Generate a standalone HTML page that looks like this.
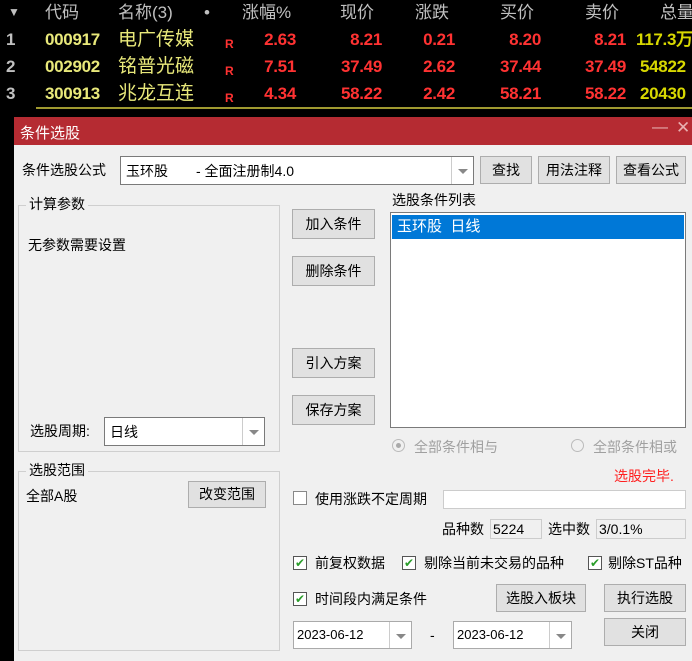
<!DOCTYPE html><html><head><meta charset="utf-8"><style>
*{margin:0;padding:0;box-sizing:border-box}
body{width:692px;height:661px;background:#000;position:relative;overflow:hidden;font-family:"Liberation Sans","Noto Sans CJK SC",sans-serif}
.a{position:absolute;white-space:nowrap}
.t{font-size:17px;line-height:20px}
.n{font-family:"Liberation Sans Narrow","Liberation Sans",sans-serif;font-weight:bold;letter-spacing:-0.3px}
.h{color:#c0c0c0}.y{color:#e8e87a}.r{color:#ff3232}.o{color:#d8d800}
.rt{text-align:right}
.f{font-size:14px;color:#000;line-height:16px}
.btn{position:absolute;background:#e1e1e1;border:1px solid #adadad;font-size:14px;text-align:center;color:#000}
.box{position:absolute;background:#fff;border:1px solid #7a7a7a}
.dd{position:absolute;right:0;top:0;bottom:0;width:22px;border-left:1px solid #ccc;background:#fff}
.dd:after{content:"";position:absolute;left:6px;top:45%;border:5px solid transparent;border-top-color:#888}
.grp{position:absolute;border:1px solid #cfcfcf}
.cb{position:absolute;width:14px;height:14px;border:1px solid #555;background:#fff;font-size:12px;line-height:12px;color:#2a9d2a;text-align:center}
</style></head><body>
<div class="a t h" style="left:8px;top:2px;font-size:12px">▼</div>
<div class="a t h" style="left:45px;top:3px">代码</div>
<div class="a t h" style="left:118px;top:3px">名称(3)</div>
<div class="a t h" style="left:204px;top:3px">•</div>
<div class="a t h" style="left:242px;top:3px">涨幅%</div>
<div class="a t h" style="left:340px;top:3px">现价</div>
<div class="a t h" style="left:415px;top:3px">涨跌</div>
<div class="a t h" style="left:500px;top:3px">买价</div>
<div class="a t h" style="left:585px;top:3px">卖价</div>
<div class="a t h" style="left:660px;top:3px">总量</div>

<div class="a t h n" style="left:6px;top:30px">1</div><div class="a t y n" style="left:45px;top:30px">000917</div><div class="a t y" style="left:118px;top:30px;font-size:19px">电广传媒</div><div class="a r" style="left:225px;top:37px;font-size:12px;font-weight:bold">R</div>
<div class="a t r rt n" style="right:396px;top:30px">2.63</div><div class="a t r rt n" style="right:310px;top:30px">8.21</div><div class="a t r rt n" style="right:237px;top:30px">0.21</div><div class="a t r rt n" style="right:151px;top:30px">8.20</div><div class="a t r rt n" style="right:66px;top:30px">8.21</div><div class="a t o n" style="left:636px;top:30px">117.3万</div>
<div class="a t h n" style="left:6px;top:57px">2</div><div class="a t y n" style="left:45px;top:57px">002902</div><div class="a t y" style="left:118px;top:57px;font-size:19px">铭普光磁</div><div class="a r" style="left:225px;top:64px;font-size:12px;font-weight:bold">R</div>
<div class="a t r rt n" style="right:396px;top:57px">7.51</div><div class="a t r rt n" style="right:310px;top:57px">37.49</div><div class="a t r rt n" style="right:237px;top:57px">2.62</div><div class="a t r rt n" style="right:151px;top:57px">37.44</div><div class="a t r rt n" style="right:66px;top:57px">37.49</div><div class="a t o n" style="left:640px;top:57px">54822</div>
<div class="a t h n" style="left:6px;top:84px">3</div><div class="a t y n" style="left:45px;top:84px">300913</div><div class="a t y" style="left:118px;top:84px;font-size:19px">兆龙互连</div><div class="a r" style="left:225px;top:91px;font-size:12px;font-weight:bold">R</div>
<div class="a t r rt n" style="right:396px;top:84px">4.34</div><div class="a t r rt n" style="right:310px;top:84px">58.22</div><div class="a t r rt n" style="right:237px;top:84px">2.42</div><div class="a t r rt n" style="right:151px;top:84px">58.21</div><div class="a t r rt n" style="right:66px;top:84px">58.22</div><div class="a t o n" style="left:640px;top:84px">20430</div>
<div class="a" style="left:36px;top:107px;width:656px;height:2px;background:#a09a30"></div>

<div class="a" style="left:14px;top:117px;width:678px;height:28px;background:#b52b32"></div>
<div class="a" style="left:20px;top:122px;color:#fff;font-size:15px">条件选股</div>
<div class="a" style="left:652px;top:119px;color:#e8b0b0;font-size:16px">—</div>
<div class="a" style="left:676px;top:118px;color:#e8b0b0;font-size:17px">✕</div>
<div class="a" style="left:14px;top:145px;width:678px;height:516px;background:#f0f0f0"></div>

<div class="a f" style="left:22px;top:162px">条件选股公式</div>
<div class="box" style="left:120px;top:156px;width:354px;height:29px"><div class="a f" style="left:5px;top:6px">玉环股　　- 全面注册制4.0</div><div class="dd"></div></div>
<div class="btn" style="left:480px;top:156px;width:52px;height:28px;line-height:26px">查找</div>
<div class="btn" style="left:538px;top:156px;width:72px;height:28px;line-height:26px">用法注释</div>
<div class="btn" style="left:616px;top:156px;width:70px;height:28px;line-height:26px">查看公式</div>

<div class="grp" style="left:18px;top:205px;width:262px;height:247px"></div>
<div class="a f" style="left:26px;top:196px;background:#f0f0f0;padding:0 3px">计算参数</div>
<div class="a f" style="left:28px;top:237px">无参数需要设置</div>
<div class="a f" style="left:30px;top:423px">选股周期:</div>
<div class="box" style="left:104px;top:417px;width:161px;height:29px"><div class="a f" style="left:5px;top:6px">日线</div><div class="dd"></div></div>

<div class="btn" style="left:292px;top:209px;width:83px;height:30px;line-height:28px">加入条件</div>
<div class="btn" style="left:292px;top:256px;width:83px;height:30px;line-height:28px">删除条件</div>
<div class="btn" style="left:292px;top:348px;width:83px;height:30px;line-height:28px">引入方案</div>
<div class="btn" style="left:292px;top:395px;width:83px;height:30px;line-height:28px">保存方案</div>

<div class="a f" style="left:392px;top:192px">选股条件列表</div>
<div class="box" style="left:390px;top:212px;width:296px;height:216px"><div class="a" style="left:1px;top:2px;width:292px;height:24px;background:#0078d7;color:#fff;font-size:15px;line-height:24px;padding-left:5px">玉环股&nbsp;&nbsp;日线</div></div>
<div class="a" style="left:392px;top:439px;width:13px;height:13px;border-radius:50%;border:1px solid #bbb;background:#f0f0f0"><div class="a" style="left:3px;top:3px;width:5px;height:5px;border-radius:50%;background:#aaa"></div></div>
<div class="a f" style="left:414px;top:439px;color:#a0a0a0">全部条件相与</div>
<div class="a" style="left:571px;top:439px;width:13px;height:13px;border-radius:50%;border:1px solid #bbb"></div>
<div class="a f" style="left:593px;top:439px;color:#a0a0a0">全部条件相或</div>

<div class="grp" style="left:18px;top:471px;width:262px;height:180px"></div>
<div class="a f" style="left:26px;top:462px;background:#f0f0f0;padding:0 3px">选股范围</div>
<div class="a f" style="left:26px;top:488px">全部A股</div>
<div class="btn" style="left:188px;top:481px;width:78px;height:27px;line-height:25px">改变范围</div>

<div class="a f" style="left:614px;top:468px;color:#ff2020">选股完毕.</div>
<div class="cb" style="left:293px;top:491px;border-color:#888"></div>
<div class="a f" style="left:315px;top:491px">使用涨跌不定周期</div>
<div class="box" style="left:443px;top:490px;width:243px;height:19px;border-color:#ccc"></div>
<div class="a f" style="left:442px;top:521px">品种数</div>
<div class="a" style="left:490px;top:519px;width:52px;height:20px;border:1px solid #ccc;font-size:14px;padding:1px 2px">5224</div>
<div class="a f" style="left:548px;top:521px">选中数</div>
<div class="a" style="left:596px;top:519px;width:90px;height:20px;border:1px solid #ccc;font-size:14px;padding:1px 2px">3/0.1%</div>

<div class="cb" style="left:293px;top:556px">✔</div><div class="a f" style="left:315px;top:555px">前复权数据</div>
<div class="cb" style="left:402px;top:556px">✔</div><div class="a f" style="left:424px;top:555px">剔除当前未交易的品种</div>
<div class="cb" style="left:588px;top:556px">✔</div><div class="a f" style="left:608px;top:555px">剔除ST品种</div>
<div class="cb" style="left:293px;top:592px">✔</div><div class="a f" style="left:315px;top:591px">时间段内满足条件</div>
<div class="btn" style="left:496px;top:584px;width:90px;height:28px;line-height:26px">选股入板块</div>
<div class="btn" style="left:604px;top:584px;width:82px;height:28px;line-height:26px">执行选股</div>
<div class="box" style="left:293px;top:621px;width:119px;height:28px;border-color:#aaa"><div class="a" style="left:3px;top:5px;font-size:13px">2023-06-12</div><div class="dd"></div></div>
<div class="a f" style="left:430px;top:627px">-</div>
<div class="box" style="left:453px;top:621px;width:119px;height:28px;border-color:#aaa"><div class="a" style="left:3px;top:5px;font-size:13px">2023-06-12</div><div class="dd"></div></div>
<div class="btn" style="left:604px;top:618px;width:82px;height:28px;line-height:26px">关闭</div>
</body></html>
